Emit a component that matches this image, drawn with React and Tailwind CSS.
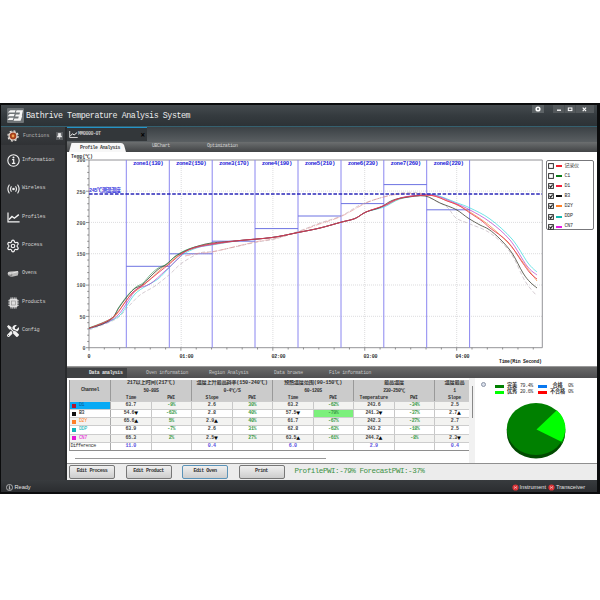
import React from 'react';
import { Settings } from 'lucide-react';
import { FaTools } from 'react-icons/fa';

const MONO = "font-['Liberation_Mono','Noto_Sans_CJK_SC',monospace]";

const zones = [
  ['zone1(130)', 126.3, 266.3],
  ['zone2(150)', 169.3, 253.8],
  ['zone3(170)', 212.2, 241.2],
  ['zone4(190)', 255, 228.6],
  ['zone5(210)', 298, 216],
  ['zone6(230)', 341, 203.6],
  ['zone7(260)', 383.8, 184.6],
  ['zone8(220)', 426.7, 209.8],
];

// Catmull-Rom smoothing through the sampled points of a profile.
function smooth(p) {
  let d = `M${p[0][0]} ${p[0][1]}`;
  for (let i = 0; i < p.length - 1; i++) {
    const a = p[i - 1] || p[i];
    const b = p[i];
    const c = p[i + 1];
    const e = p[i + 2] || c;
    d += `C${b[0] + (c[0] - a[0]) / 6} ${b[1] + (c[1] - a[1]) / 6} ${c[0] - (e[0] - b[0]) / 6} ${c[1] - (e[1] - b[1]) / 6} ${c[0]} ${c[1]}`;
  }
  return d;
}

const mid = [[240, 240.5], [272, 237.5], [298, 232.5], [320, 228], [341, 222.2], [355, 218.5], [366, 212]];
const curves = [
  { c: '#b9a9b4', dash: '4 2', w: 0.6, p: [[89, 330], [116, 319], [128, 307], [140, 295], [155, 286], [170, 274], [182, 263], [200, 253], [216, 251], [255, 242.5], [275, 239], [298, 231.5], [320, 223], [341, 216], [360, 205], [380, 198], [400, 193], [420, 193], [432, 199], [447, 207], [456, 218], [470, 224], [490, 233], [510, 252], [525, 281], [536, 295]] },
  { c: '#e08a8a', dash: '6 1 1 1', w: 0.6, p: [[185, 256], [200, 253], [212, 252], [255, 242], [275, 238.5], [298, 232], [318, 224.5], [341, 216.5], [365, 203.5], [382, 197.5], [400, 194], [425, 193.5]] },
  { c: '#30d8dc', p: [[89, 329], [108, 322], [119, 316], [126, 307], [135, 294], [146, 286], [158, 279], [169, 268], [182, 255], [198, 247.5], [212, 245], ...mid, [384, 207], [400, 199], [420, 195.5], [434, 194.5], [456, 202.5], [470, 208], [490, 219], [512, 239], [528, 263], [537, 272]] },
  { c: '#f18a32', p: [[89, 328], [108, 321], [117, 314], [125, 302], [132, 294], [145, 284], [160, 270], [170, 262.5], [182, 253], [198, 247], [212, 244.5], ...mid, [384, 206], [400, 198.5], [420, 195], [434, 196], [456, 204.5], [470, 212], [490, 226], [510, 245], [525, 265], [537, 281]] },
  { c: '#b239c7', p: [[89, 328.5], [108, 322], [119, 314], [128, 301], [137, 289], [150, 284], [165, 271], [178, 259], [188, 250], [212, 244.5], ...mid, [384, 206], [400, 198], [420, 195], [434, 195], [456, 203.5], [470, 210], [490, 222], [510, 240], [527, 266], [537, 275]] },
  { c: '#4b4b3e', w: 0.85, p: [[89, 328], [100, 325], [112, 318.5], [118, 309], [126, 298], [134, 289], [142, 285], [150, 277], [158, 269.5], [166, 264.5], [176, 256], [188, 249.5], [200, 245.5], [212, 243], ...mid, [380, 207.5], [392, 200.5], [405, 197.5], [425, 196], [440, 203], [456, 209.5], [468, 218], [480, 225], [489, 229.5], [500, 239], [512, 253], [523, 273], [530, 282], [537, 288]] },
  { c: '#2f9250', w: 0.6, p: [[89, 328], [112, 318], [119, 307], [127, 296], [136, 287], [143, 283], [151, 274], [159, 267.5], [167, 264], [176, 255.5], [190, 248.5], [212, 243]] },
  { c: '#e53552', w: 0.85, p: [[89, 328.5], [108, 320.5], [117, 313], [126, 301], [133, 292], [145, 283.5], [158, 273], [170, 263.5], [180, 255], [193, 248], [212, 243.8], ...mid, [384, 205.5], [396, 199.5], [410, 196.5], [432, 195.5], [447, 201], [458, 205], [470, 213], [482, 221], [490, 228], [508, 242], [522, 262], [530, 273], [537, 279]] },
];

const gridX = [181.2, 272.9, 364.7, 456.7];
const gridY = [191.1, 222.4, 253.7, 285, 316.3];

function Chart() {
  return (
    <svg width="479" height="214" viewBox="67 152 479 214" className={`block shrink-0 ${MONO}`}>
      <text x="71" y="157.6" fontSize="4.8" fontWeight="bold" fill="#333" textLength="22">Temp(℃)</text>
      {gridX.map((x) => <path key={x} d={`M${x} 160V347.7`} stroke="#c4c4c8" strokeWidth=".6" strokeDasharray="1 1" />)}
      {gridY.map((y) => <path key={y} d={`M89 ${y}H542`} stroke="#c4c4c8" strokeWidth=".6" strokeDasharray="1 1" />)}
      <path d="M89 160H542.3V347.7H89Z" fill="none" stroke="#77777c" strokeWidth=".8" />
      {Array.from({ length: 31 }, (_, i) => {
        const y = 347.7 - i * 6.26;
        return <path key={i} d={`M${i % 5 ? 87.2 : 86} ${y}H89`} stroke="#666" strokeWidth=".7" />;
      })}
      {Array.from({ length: 30 }, (_, i) => {
        const x = 89 + i * 15.32;
        return <path key={i} d={`M${x} 347.7v${i % 6 ? 1.8 : 3}`} stroke="#666" strokeWidth=".7" />;
      })}
      {[300, 250, 200, 150, 100, 50, 0].map((v, i) => (
        <text key={v} x="85.5" y={162.2 + i * 31.3} fontSize="5" fontWeight="bold" fill="#555" textAnchor="end">{v}</text>
      ))}
      {[126.3, 169.3, 212.2, 255, 298, 341, 383.8, 426.7, 469.6].map((x) => (
        <path key={x} d={`M${x} 160V347.7`} stroke="#8a86f0" strokeWidth="1" />
      ))}
      {zones.map(([n, x, y]) => (
        <g key={n}>
          <path d={`M${x} ${y}h43`} stroke="#6d73e2" strokeWidth="1" />
          <text x={x + 6.8} y="164.8" fontSize="5.7" fontWeight="bold" fill="#2222d8" textLength="30.5">{n}</text>
        </g>
      ))}
      {curves.map((k, i) => (
        <path key={i} d={smooth(k.p)} fill="none" stroke={k.c} strokeWidth={k.w || 0.7} strokeDasharray={k.dash} />
      ))}
      <path d="M89 194H542" stroke="#2a27b8" strokeWidth="1.5" strokeDasharray="3.6 1.6" />
      <text x="89" y="192" fontSize="5.2" fontWeight="bold" fill="#3a3ae0" textLength="32">245℃测温温度</text>
      {['0', '01:00', '02:00', '03:00', '04:00'].map((t, i) => (
        <text key={t} x={i ? 94.5 + i * 92 : 89} y="357.8" fontSize="5" fontWeight="bold" fill="#333" textAnchor="middle" textLength={i ? 14 : undefined}>{t}</text>
      ))}
      <text x="499" y="363.3" fontSize="4.8" fontWeight="bold" fill="#222" textLength="43">Time(Min Second)</text>
    </svg>
  );
}

const legend = [
  ['记录仪', '#f0202c', false],
  ['C1', '#0a7a18', false],
  ['D1', '#f0203c', true],
  ['B3', '#111111', true],
  ['D2Y', '#ff7f27', true],
  ['DDP', '#12b8b0', true],
  ['CN7', '#e619e6', true],
];

function Legend() {
  return (
    <div className="mt-[8px] h-[70px] w-[48px] shrink-0 rounded-[2px] border border-[#77777b] bg-white">
      {legend.map(([n, c, on]) => (
        <div key={n} className="flex h-[10.1px] items-center pl-[1px]">
          <svg width="6" height="6" viewBox="0 0 6 6" className="shrink-0">
            <rect x=".6" y=".6" width="4.8" height="4.8" fill="#fff" stroke="#333" strokeWidth="1" />
            {on && <path d="M1.5 2.6L2.7 4.3 4.6 1.6" fill="none" stroke="#222" strokeWidth="1.1" />}
          </svg>
          <span className="ml-[1.5px] h-[2px] w-[6px]" style={{ background: c }} />
          <span className="ml-[3px] text-[5px] leading-none tracking-[-0.3px] text-[#333]">{n}</span>
        </div>
      ))}
    </div>
  );
}

function WirelessIcon() {
  return (
    <svg width="13" height="10" viewBox="0 0 13 10" fill="none" stroke="#f2f2f2" strokeWidth="1.1" strokeLinecap="round">
      <circle cx="6.5" cy="5" r="1.3" fill="#f2f2f2" stroke="none" />
      <path d="M4.2 2.7Q2.9 5 4.2 7.3M8.8 2.7Q10.1 5 8.8 7.3M2.2 1Q-.4 5 2.2 9M10.8 1Q13.4 5 10.8 9" />
    </svg>
  );
}

function ProfileIcon({ size = 13 }) {
  return (
    <svg width={size} height={size} viewBox="0 0 13 13" fill="none" stroke="#f5f5f5" strokeWidth="1.2" className="shrink-0">
      <path d="M1 1.5V10.8H12.6" />
      <path d="M2 8.6L5 5.4 7.4 7.2 11.8 3.6" strokeWidth="1.4" />
    </svg>
  );
}

function InfoIcon({ size = 13 }) {
  return (
    <svg width={size} height={size} viewBox="0 0 13 13">
      <circle cx="6.5" cy="6.5" r="5.7" fill="none" stroke="#f4f4f4" strokeWidth="1.1" />
      <circle cx="6.5" cy="3.6" r="1" fill="#f4f4f4" />
      <path d="M5.1 5.6H6.7V9.4M4.9 9.4H8.3" stroke="#f4f4f4" strokeWidth="1.2" fill="none" />
    </svg>
  );
}

function OvenIcon() {
  return (
    <svg width="12" height="8" viewBox="0 0 12 8">
      <path d="M.6 3.2Q1 1.6 3 1.5L10.6 1Q11.6 1.2 11.4 3L10.8 5.6 5 6.8Q.8 6.4 .6 3.2Z" fill="#b9b9b9" />
      <path d="M1 3L5 3.2 11 1.6" stroke="#f1f1f1" strokeWidth=".8" fill="none" />
      <path d="M2 5.2L4.8 5.6V3.6" stroke="#666" strokeWidth=".6" fill="none" />
    </svg>
  );
}

function ChipIcon() {
  return (
    <svg width="11" height="12" viewBox="0 0 11 12">
      <path d="M3 .3V11.7M4.7 .3V11.7M6.3 .3V11.7M8 .3V11.7M.3 3.4H10.7M.3 5.1H10.7M.3 6.8H10.7M.3 8.5H10.7" stroke="#e4e4e4" strokeWidth=".8" />
      <rect x="1.6" y="1.8" width="7.8" height="8.4" rx=".8" fill="#dedede" />
      <rect x="3.6" y="4" width="3.8" height="4" fill="none" stroke="#888" strokeWidth=".6" />
    </svg>
  );
}

const nav = [
  ['Information', <InfoIcon />],
  ['Wireless', <WirelessIcon />],
  ['Profiles', <ProfileIcon />],
  ['Process', <Settings size={14} color="#f2f2f2" strokeWidth={2} />],
  ['Ovens', <OvenIcon />],
  ['Products', <ChipIcon />],
  ['Config', <FaTools size={12} color="#f2f2f2" />],
];

function Sidebar() {
  return (
    <aside className="flex w-[66px] shrink-0 flex-col border-r-2 border-[#292b2d] bg-[#37393c]">
      <div className="mb-[1.5px] flex h-[18px] shrink-0 items-center bg-gradient-to-b from-[#3c4043] to-[#303235] pl-[6px]">
        <svg width="12" height="12" viewBox="0 0 12 12">
          <circle cx="6" cy="6" r="4" fill="#a6401c" stroke="#e6e0da" strokeWidth="1.2" />
          <circle cx="6" cy="6" r="5.1" fill="none" stroke="#e6e0da" strokeWidth="1.2" strokeDasharray="2 2" />
          <circle cx="6" cy="6" r="1.4" fill="#f0a050" />
        </svg>
        <span className="ml-[4px] w-[32px] text-[4.9px] text-[#b4b4b4]">Functions</span>
        <span className="ml-[1px] flex h-[8px] w-[7px] items-center justify-center bg-[#5b5e61]">
          <svg width="5" height="6" viewBox="0 0 5 6"><path d="M1.2 .3H3.8V3.2H4.8V4H.2V3.2H1.2ZM2.5 4V6" fill="#eee" stroke="#eee" strokeWidth=".5" /></svg>
        </span>
      </div>
      {nav.map(([n, icon]) => (
        <div key={n} className="flex h-[28.4px] shrink-0 items-center pl-[5px]">
          <span className="flex w-[14px] justify-center">{icon}</span>
          <span className="ml-[2px] text-[5.2px] tracking-[-0.2px] text-[#cfcfcf]">{n}</span>
        </div>
      ))}
    </aside>
  );
}

function TitleBar() {
  return (
    <header className="flex h-[22px] shrink-0 items-start border-b border-[#35606f] bg-gradient-to-b from-[#454b4f] via-[#353b3f] to-[#2c3236]">
      <svg width="17" height="15" viewBox="0 0 17 15" className="ml-[6px] mt-[2.5px]">
        <rect width="17" height="15" rx="1" fill="#6f7477" />
        <path d="M3.4 2.2H8.6L7.8 4.6H.8ZM2.8 6H7.6L6.8 8.2H.6ZM2.4 9.8H6.6L5.8 12H.4Z" fill="#f6f6f6" />
        <path d="M9.6 2.2H16L14.8 7.2 15.2 8 13.6 12.8H6.6L7.4 10.6H11.2L11.8 8.6H8.2L8.8 6.6H12.4L13 4.4H8.8Z" fill="#f6f6f6" />
      </svg>
      <h1 className="ml-[2px] mt-[5.5px] whitespace-nowrap text-[8.3px] leading-[10px] tracking-[-0.42px] text-[#ececec]">Bathrive Temperature Analysis System</h1>
      <div className="ml-auto mr-[3px] flex h-[8px] items-center">
        <span className="mr-[9px] flex h-[8px] w-[12px] items-center justify-center bg-[#5c6265]">
          <svg width="6" height="6" viewBox="0 0 6 6"><circle cx="3" cy="3" r="1.8" fill="none" stroke="#fff" strokeWidth="1.6" /></svg>
        </span>
        <svg width="41" height="8" viewBox="0 0 41 8">
          <rect width="41" height="8" fill="#54595c" />
          <path d="M11.5 0V8M22.5 0V8" stroke="#454a4e" strokeWidth=".7" />
          <path d="M4 5.2H8" stroke="#fff" strokeWidth="1.3" />
          <rect x="15.3" y="3" width="3.6" height="2.6" fill="none" stroke="#fff" strokeWidth="1" />
          <path d="M29.7 2.7L33.1 6.1M33.1 2.7L29.7 6.1" stroke="#fff" strokeWidth="1.1" />
        </svg>
      </div>
    </header>
  );
}

function DocumentTabs() {
  return (
    <div className="flex h-[15px] shrink-0 bg-gradient-to-b from-[#3b4145] to-[#5a5f62]">
      <div className="flex h-[14px] w-[80px] items-center border-t-[1.5px] border-[#2493c8] bg-[#33373a] pl-[2px]">
        <ProfileIcon size={9} />
        <span className="text-[5px] font-bold tracking-[-0.5px] text-[#c4c4c4]">MM0000-0T</span>
        <span className="ml-auto mr-[2px] font-sans text-[8px] font-bold leading-none text-black">×</span>
      </div>
    </div>
  );
}

function PageTabs() {
  return (
    <div className="flex h-[10px] shrink-0 items-center bg-gradient-to-b from-[#6c6f70] to-[#424446] text-[5px] tracking-[-0.45px] text-[#cfcfcf]">
      <svg width="60" height="10" viewBox="0 0 60 10" className="shrink-0">
        <path d="M2 10L4.5 1H54Q56 1 57 3L59 10Z" fill="#f7f7f7" />
        <text x="13" y="7" fontSize="4.8" fontWeight="bold" fill="#444" textLength="40">Profile Analysis</text>
      </svg>
      <span className="w-[80px] pl-[25px]">UBChart</span>
      <span>Optimization</span>
    </div>
  );
}

function DataTabs() {
  return (
    <div className="flex h-[11px] shrink-0 items-center bg-gradient-to-b from-[#6a6a6a] to-[#4e4e50] pt-[1px] text-[4.8px] tracking-[-0.25px] text-[#c4c4c4]">
      <span className="flex h-full w-[60px] items-center bg-[#404244] pl-[22px] font-bold tracking-[-0.3px] text-[#e2e2e2]">Data analysis</span>
      <span className="w-[82px] pl-[19px]">Oven information</span>
      <span className="w-[65px] whitespace-nowrap">Region Analysis</span>
      <span className="w-[55px]">Data browse</span>
      <span>File information</span>
    </div>
  );
}

const groups = [
  ['217以上时间(217℃)', '50-80S', 'w-[81px]', 'Time', 'w-[40.5px]', 'PWI', 'w-[40.5px]'],
  ['温度上升最高斜率(150-240℃)', '0-4℃/S', 'w-[81px]', 'Slope', 'w-[40.5px]', 'PWI', 'w-[40.5px]'],
  ['预热温度范围(90-150℃)', '60-120S', 'w-[81px]', 'Time', 'w-[40.5px]', 'PWI', 'w-[40.5px]'],
  ['最高温度', '230-250℃', 'w-[81px]', 'Temperature', 'w-[40px]', 'PWI', 'w-[41px]'],
  ['温度最高', '1', 'w-[40px]', 'Slope', 'w-[40px]'],
];

const rows = [
  ['D1', '#b01830', ['63.7', '-9%', '2.6', '30%', '63.2', '-62%', '243.6', '-34%', '2.5']],
  ['B3', '#111111', ['54.6▼', '-63%', '2.8', '40%', '57.5▼', '-79%', '241.3▼', '-37%', '2.7▲']],
  ['D2Y', '#ff7f27', ['65.6▲', '5%', '2.9▲', '40%', '61.7', '-67%', '242.3', '-27%', '2.7']],
  ['DDP', '#14b4b8', ['63.9', '-7%', '2.6', '31%', '62.8', '-63%', '243.2', '-18%', '2.5']],
  ['CN7', '#e619d6', ['65.3', '2%', '2.5▼', '27%', '63.5▲', '-61%', '244.2▲', '-8%', '2.3▼']],
  ['Difference', '', ['11.0', '', '0.4', '', '6.0', '', '2.9', '', '0.4']],
];

function DataTable() {
  return (
    <div className="w-[400px] shrink-0 overflow-hidden border-b border-l border-[#8e8e8e] text-[5px] leading-[7px] text-[#333]">
      <div className="flex h-[21px] w-[410px] bg-[#cbcbcb]">
        <div className="flex w-[41px] shrink-0 items-center justify-center border-r border-[#999] font-bold tracking-[-0.4px]">Channel</div>
        {groups.map((g, i) => (
          <div key={i} className={`${g[2]} flex shrink-0 flex-col border-r border-[#999] text-center`}>
            <div className="flex h-[8px] items-center justify-center whitespace-nowrap text-[5.2px] font-bold leading-none tracking-[-0.2px]">{g[0]}</div>
            <div className="flex h-[6px] items-center justify-center text-[4.8px] font-bold leading-none tracking-[-0.4px]">{g[1]}</div>
            <div className="flex text-[4.8px] font-bold tracking-[-0.3px]">
              <span className={g[4]}>{g[3]}</span>
              {g[5] && <span className={g[6]}>{g[5]}</span>}
            </div>
          </div>
        ))}
      </div>
      {rows.map(([n, c, cells], r) => (
        <div key={n} className={`flex h-[8.15px] w-[410px] border-t border-[#cdcdcd] ${r % 2 ? 'bg-white' : 'bg-[#f3f3f1]'}`}>
          <div className={`flex w-[41px] shrink-0 items-center border-r border-[#aaa] ${r === 0 ? 'bg-[#08aaf5]' : ''}`}>
            {c ? (
              <>
                <span className="ml-[2px] size-[4px]" style={{ background: c }} />
                <span className="ml-[3px] tracking-[-0.4px]" style={{ color: r === 0 ? '#0f5b98' : c }}>{n}</span>
              </>
            ) : (
              <span className="ml-[0.5px] text-[5px] tracking-[-0.48px] text-[#333]">{n}</span>
            )}
          </div>
          {cells.map((v, i) => (
            <div
              key={i}
              className={`flex w-[40.5px] shrink-0 items-center justify-center border-r border-[#c8c8c8] font-bold tracking-[-0.4px] ${
                r === 5 ? 'text-[#5a50e0]' : i % 2 ? 'text-[#3b9a48]' : 'text-[#444]'
              } ${r === 1 && i === 5 ? 'bg-[#7cf07c]' : ''}`}
            >
              {v.replace(/[▲▼]/, '')}
              {/[▲▼]/.test(v) && <span className="text-[6.5px] text-black">{v.slice(-1)}</span>}
            </div>
          ))}
        </div>
      ))}
    </div>
  );
}

const shares = [
  ['完美', '79.4%', '#008000'],
  ['合格', '0%', '#0878f0'],
  ['优秀', '20.6%', '#00ff00'],
  ['不合格', '0%', '#ff0000'],
];

function PiePanel() {
  return (
    <div className="flex grow bg-white">
      <span className="ml-[6px] mt-[4px] size-[5px] shrink-0 rounded-full border border-[#8b94a6] bg-[#d9dfea]" />
      <div className="ml-[9px] mt-[5.5px] w-[90px]">
        <div className="grid grid-cols-[43px_43px] text-[#333]">
          {shares.map(([n, v, c], i) => (
            <div key={n} className="flex h-[6px] items-center leading-none">
              <span className="h-[3.8px] w-[9px] shrink-0" style={{ background: c }} />
              <span className={`shrink-0 whitespace-nowrap text-center text-[5.2px] font-bold tracking-[-0.2px] ${i % 2 ? 'w-[21px]' : 'w-[16px]'}`}>{n}</span>
              <span className="text-[4.9px] tracking-[-0.35px]">{v}</span>
            </div>
          ))}
        </div>
        <svg width="62" height="60" viewBox="505 400 62 60" className="ml-[10px] mt-[5px]">
          <path d="M506.8 428V431.5A29.2 26 0 0 0 565.2 431.5V428Z" fill="#004a00" />
          <ellipse cx="536" cy="428" rx="29.2" ry="26" fill="#008000" />
          <path d="M536.5 428.5L556.8 409.3A29.2 26 0 0 1 561.4 440.8Z" fill="#00ff00" />
          <path d="M561.4 440.8Q565 435 565.2 428V431.5Q564.5 439 561.4 444Z" fill="#00a000" />
        </svg>
      </div>
    </div>
  );
}

function ActionBar() {
  return (
    <div className="flex h-[17px] shrink-0 items-center border-t border-[#8f8f8f] bg-[#ececec] pl-[2px]">
      {['Edit Process', 'Edit Product', 'Edit Oven', 'Print'].map((b, i) => (
        <button
          key={b}
          className={`mr-[10.5px] flex h-[13.5px] w-[46px] shrink-0 items-center justify-center rounded-[2px] border bg-gradient-to-b from-[#f0f0f0] to-[#cdcdcd] text-[5.1px] font-bold tracking-[-0.5px] text-[#333] ${
            i === 2 ? 'border-[#5b93b8]' : 'border-[#777]'
          }`}
        >
          {b}
        </button>
      ))}
      <span className="-ml-[0.5px] whitespace-nowrap text-[7.6px] tracking-[-0.5px] text-[#3c9146]">ProfilePWI:-79% ForecastPWI:-37%</span>
    </div>
  );
}

function StatusDot() {
  return (
    <svg width="7" height="7" viewBox="0 0 7 7">
      <circle cx="3.5" cy="3.5" r="3.1" fill="#d93438" />
      <path d="M2 4.6L5 2.4M2 2.6L5 4.4" stroke="#f5b4b4" strokeWidth=".8" />
    </svg>
  );
}

function StatusBar() {
  return (
    <footer className="flex h-[12px] shrink-0 items-start bg-gradient-to-b from-[#383b3e] to-[#2b2d30] pl-[5px] pr-[12px] pt-[3.5px] font-['Liberation_Sans',sans-serif] text-[5.6px] leading-[7px] text-[#e2e2e2]">
      <InfoIcon size={7} />
      <span className="ml-[1.5px]">Ready</span>
      <span className="ml-auto flex items-center gap-[1px]">
        <StatusDot />
        <span className="mr-[1px]">Instrument</span>
        <StatusDot />
        <span>Transceiver</span>
      </span>
    </footer>
  );
}

export default function App() {
  return (
    <div className={`h-[600px] w-[600px] overflow-hidden bg-white pt-[103px] ${MONO}`}>
      <div className="flex h-[391px] flex-col border-b-2 border-l border-r-[3px] border-t-2 border-[#0b0c0d] bg-[#37393c]">
        <TitleBar />
        <div className="flex h-[353px] shrink-0">
          <Sidebar />
          <main className="flex min-w-0 grow flex-col">
            <DocumentTabs />
            <PageTabs />
            <section className="flex h-[214px] shrink-0 bg-white">
              <Chart />
              <Legend />
            </section>
            <div className="h-[1px] shrink-0 bg-[#999]" />
            <DataTabs />
            <section className="flex h-[85px] shrink-0 bg-[#f1f1f1]">
              <div className="flex w-[402px] shrink-0 flex-col bg-white pl-[2px] pt-[2px]">
                <DataTable />
                <div className="ml-[6px] mt-[7px] h-[1px] w-[251px] bg-[#999]" />
              </div>
              <div className="w-[6px] shrink-0 pl-[3px] pt-[8px]">
                <div className="h-[32px] w-[1px] bg-[#888]" />
              </div>
              <PiePanel />
            </section>
            <ActionBar />
          </main>
        </div>
        <StatusBar />
      </div>
    </div>
  );
}
